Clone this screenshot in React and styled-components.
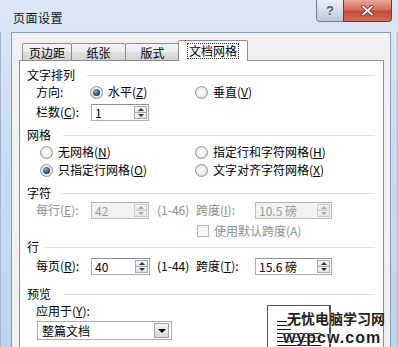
import React from 'react';
import styled, { createGlobalStyle } from 'styled-components';

const Global = createGlobalStyle`
  html, body { margin: 0; padding: 0; background: #fff; }
  body {
    font-family: "Noto Sans CJK SC", "Liberation Sans", sans-serif;
    font-size: 12px;
    color: #000;
  }
  * { box-sizing: border-box; }
`;

const Window = styled.div`
  position: relative;
  width: 398px;
  height: 347px;
  overflow: hidden;
  display: flex;
  flex-direction: column;
  background: linear-gradient(180deg, #dbe8f6 0%, #c9dcf1 45%, #bfd5ed 100%);
`;

const TitleBar = styled.div`
  height: 32px;
  flex: none;
  display: flex;
  align-items: flex-start;
  padding-left: 13px;
`;

const Title = styled.div`
  margin-top: 10px;
  line-height: 16px;
  font-size: 12px;
  letter-spacing: 0.5px;
  color: #111;
`;

const Controls = styled.div`
  margin-left: auto;
  margin-right: 6px;
  display: flex;
`;

const HelpButton = styled.div`
  width: 27px;
  height: 22px;
  border: 1px solid #6f7d93;
  border-top: none;
  border-right: none;
  border-radius: 0 0 0 4px;
  background: linear-gradient(180deg, #e9eef5 0%, #d3dce8 50%, #bfcbdb 100%);
  display: flex;
  align-items: center;
  justify-content: center;
  font-family: "Liberation Sans", sans-serif;
  font-weight: bold;
  font-size: 13px;
  color: #4b5566;
  text-shadow: 0 0 2px #fff;
`;

const CloseButton = styled.div`
  width: 49px;
  height: 22px;
  border: 1px solid #6b3a36;
  border-top: none;
  border-radius: 0 0 4px 0;
  background: linear-gradient(180deg, #e9a89b 0%, #d7705f 45%, #c44a36 55%, #d2705a 100%);
  display: flex;
  align-items: center;
  justify-content: center;
`;

const Frame = styled.div`
  flex: 1;
  display: flex;
  padding: 0 7px 0 11px;
  box-shadow: inset 8px 0 0 -7px #9fb5cf, inset -3px 0 0 -2px #9fb5cf;
`;

const ClientArea = styled.div`
  flex: 1;
  display: flex;
  flex-direction: column;
  background: #f0f0f0;
  border: 1px solid #8a9cb4;
  border-bottom: none;
  padding: 7px 6px 0 7px;
`;

const TabStrip = styled.div`
  position: relative;
  z-index: 1;
  display: flex;
  align-items: flex-end;
  height: 21px;
  padding-left: 3px;
  margin-bottom: -1px;
`;

const Tab = styled.div`
  width: ${p => p.$width}px;
  height: ${p => (p.$active ? 21 : 18)}px;
  margin-right: -1px;
  margin-left: ${p => (p.$active ? -1 : 0)}px;
  border: 1px solid #898c95;
  border-bottom: ${p => (p.$active ? 'none' : '1px solid #898c95')};
  border-radius: 2px 2px 0 0;
  background: ${p =>
    p.$active ? '#fff' : 'linear-gradient(180deg, #f4f4f4 0%, #ebebeb 50%, #dddddd 51%, #d4d4d4 100%)'};
  display: flex;
  align-items: center;
  justify-content: center;
  line-height: 14px;
  padding-top: ${p => (p.$active ? 0 : 1)}px;
  position: relative;
  z-index: ${p => (p.$active ? 2 : 1)};
`;

const FocusText = styled.span`
  outline: 1px dotted #333;
  padding: 0 1px;
`;

const Panel = styled.div`
  flex: 1;
  background: #fff;
  border: 1px solid #898c95;
  border-bottom: none;
  padding: 6px 8px 0 7px;
  display: flex;
  flex-direction: column;
`;

const Header = styled.div`
  display: flex;
  align-items: center;
  height: 16px;
  margin-top: ${p => p.$mt || 0}px;
  line-height: 16px;
`;

const HeaderLine = styled.div`
  flex: 1;
  height: 1px;
  margin-left: ${p => p.$gap || 9}px;
  background: #dcdfe4;
`;

const Row = styled.div`
  display: flex;
  align-items: center;
  height: ${p => p.$h || 18}px;
  margin-top: ${p => p.$mt || 0}px;
  padding-left: ${p => p.$indent || 0}px;
  color: ${p => (p.$disabled ? '#8d8d8d' : '#000')};
  line-height: 16px;
  white-space: nowrap;
`;

const Cell = styled.div`
  width: ${p => p.$width}px;
  margin-left: ${p => p.$ml || 0}px;
  flex: none;
`;

const Option = styled.div`
  display: flex;
  align-items: center;
  gap: 5px;
  width: ${p => (p.$width ? `${p.$width}px` : 'auto')};
  flex: none;
`;

const RadioCircle = styled.div`
  width: 13px;
  height: 13px;
  border-radius: 50%;
  border: 1px solid #8e8f8f;
  background: radial-gradient(circle at 50% 45%, #ffffff 0%, #eeeeee 45%, #d4d4d4 100%);
  display: flex;
  align-items: center;
  justify-content: center;

  &::after {
    content: '';
    display: ${p => (p.$checked ? 'block' : 'none')};
    width: 7px;
    height: 7px;
    border-radius: 50%;
    background: radial-gradient(circle at 40% 35%, #8fb4d8 0%, #2f4d70 55%, #15263b 100%);
  }
`;

const CheckBox = styled.div`
  width: 12px;
  height: 12px;
  border: 1px solid #b8b8b8;
  background: linear-gradient(180deg, #f2f2f2 0%, #fbfbfb 100%);
`;

const Acc = styled.span`
  text-decoration: underline;
  text-underline-offset: 1px;
`;

const SpinBox = styled.div`
  width: ${p => p.$width}px;
  height: 17px;
  flex: none;
  display: flex;
  border: 1px solid ${p => (p.$disabled ? '#b9bcc2' : '#abadb3')};
  border-top-color: ${p => (p.$disabled ? '#b0b3b8' : '#8e9198')};
  background: ${p => (p.$disabled ? '#f1f2f4' : '#fff')};
  padding: 1px 1px 1px 0;
`;

const SpinValue = styled.div`
  flex: 1;
  padding-left: 3px;
  line-height: 13px;
  font-size: 12px;
  color: ${p => (p.$disabled ? '#9a9a9a' : '#000')};
`;

const SpinButtons = styled.div`
  width: 13px;
  display: flex;
  flex-direction: column;
`;

const SpinBtn = styled.div`
  flex: 1;
  border: 1px solid ${p => (p.$disabled ? '#c7cbd1' : '#a3aab4')};
  margin-top: ${p => (p.$down ? -1 : 0)}px;
  background: linear-gradient(180deg, #f7f8fa 0%, #dfe4ea 100%);
  display: flex;
  align-items: center;
  justify-content: center;
`;

const Arrow = styled.div`
  width: 0;
  height: 0;
  border-left: 3px solid transparent;
  border-right: 3px solid transparent;
  ${p =>
    p.$up
      ? `border-bottom: 3px solid ${p.$disabled ? '#a8a8a8' : '#333'};`
      : `border-top: 3px solid ${p.$disabled ? '#a8a8a8' : '#333'};`}
`;

const PreviewBody = styled.div`
  display: flex;
`;

const LeftCol = styled.div`
  width: 240px;
  flex: none;
  display: flex;
  flex-direction: column;
`;

const SelectBox = styled.div`
  margin-top: 2px;
  margin-left: 10px;
  width: 135px;
  height: 19px;
  border: 1px solid #a7abb2;
  background: #fff;
  display: flex;
  align-items: stretch;
  padding: 1px;
`;

const SelectText = styled.div`
  flex: 1;
  padding-left: 3px;
  line-height: 15px;
`;

const DropButton = styled.div`
  width: 15px;
  margin-right: 1px;
  border: 1px solid #9aa0a8;
  background: linear-gradient(180deg, #f3f3f3 0%, #d9d9d9 100%);
  display: flex;
  align-items: center;
  justify-content: center;

  &::after {
    content: '';
    border-left: 4px solid transparent;
    border-right: 4px solid transparent;
    border-top: 4px solid #000;
  }
`;

const Page = styled.div`
  margin-top: 3px;
  width: 64px;
  height: 70px;
  border: 1px solid #555;
  border-right-width: 2px;
  background: #fff;
  padding: 15px 0 0 9px;
  display: flex;
  flex-direction: column;
  gap: 3px;
`;

const PageLine = styled.div`
  width: ${p => p.$width}px;
  height: 1px;
  background: #111;
`;

const Watermark = styled.div`
  position: absolute;
  left: ${p => p.$left}px;
  top: ${p => p.$top}px;
  font-weight: bold;
  color: #1e1e1e;
  text-shadow: 0 0 2px #fff, 0 0 2px #fff;
  white-space: nowrap;
`;

const WatermarkCN = styled(Watermark)`
  font-family: "Noto Sans CJK SC", sans-serif;
  font-size: 14px;
  line-height: 17px;
`;

const WatermarkEN = styled(Watermark)`
  font-family: "Liberation Sans", Arial, sans-serif;
  font-size: 16px;
  letter-spacing: 1px;
  line-height: 18px;
`;

const Radio = ({ checked, width, children }) => (
  <Option $width={width}>
    <RadioCircle $checked={checked} />
    <span>{children}</span>
  </Option>
);

const Spin = ({ value, width, disabled }) => (
  <SpinBox $width={width} $disabled={disabled}>
    <SpinValue $disabled={disabled}>{value}</SpinValue>
    <SpinButtons>
      <SpinBtn $disabled={disabled}>
        <Arrow $up $disabled={disabled} />
      </SpinBtn>
      <SpinBtn $down $disabled={disabled}>
        <Arrow $disabled={disabled} />
      </SpinBtn>
    </SpinButtons>
  </SpinBox>
);

export default function App() {
  return (
    <>
      <Global />
      <Window>
        <TitleBar>
          <Title>页面设置</Title>
          <Controls>
            <HelpButton>?</HelpButton>
            <CloseButton>
              <svg width="13" height="11" viewBox="0 0 13 11">
                <path d="M2 1.5 L11 9.5 M11 1.5 L2 9.5" stroke="#5a1e16" strokeWidth="3.4" strokeLinecap="round" />
                <path d="M2 1.5 L11 9.5 M11 1.5 L2 9.5" stroke="#fff" strokeWidth="2" strokeLinecap="round" />
              </svg>
            </CloseButton>
          </Controls>
        </TitleBar>
        <Frame>
          <ClientArea>
            <TabStrip>
              <Tab $width={50}>页边距</Tab>
              <Tab $width={55}>纸张</Tab>
              <Tab $width={55}>版式</Tab>
              <Tab $width={70} $active>
                <FocusText>文档网格</FocusText>
              </Tab>
            </TabStrip>
            <Panel>
              <Header>
                <span>文字排列</span>
                <HeaderLine $gap={12} />
              </Header>
              <Row $indent={9}>
                <Cell $width={54}>方向:</Cell>
                <Radio checked width={105}>
                  水平(<Acc>Z</Acc>)
                </Radio>
                <Radio>
                  垂直(<Acc>V</Acc>)
                </Radio>
              </Row>
              <Row $indent={9} $mt={2}>
                <Cell $width={55}>
                  栏数(<Acc>C</Acc>):
                </Cell>
                <Spin value="1" width={58} />
              </Row>
              <Header $mt={6}>
                <span>网格</span>
                <HeaderLine $gap={12} />
              </Header>
              <Row $indent={13}>
                <Radio width={155}>
                  无网格(<Acc>N</Acc>)
                </Radio>
                <Radio>
                  指定行和字符网格(<Acc>H</Acc>)
                </Radio>
              </Row>
              <Row $indent={13}>
                <Radio checked width={155}>
                  只指定行网格(<Acc>O</Acc>)
                </Radio>
                <Radio>
                  文字对齐字符网格(<Acc>X</Acc>)
                </Radio>
              </Row>
              <Header $mt={6}>
                <span>字符</span>
                <HeaderLine $gap={10} />
              </Header>
              <Row $indent={9} $disabled>
                <Cell $width={55}>
                  每行(<Acc>E</Acc>):
                </Cell>
                <Spin value="42" width={58} disabled />
                <Cell $width={39} $ml={8}>
                  (1-46)
                </Cell>
                <Cell $width={59}>
                  跨度(<Acc>I</Acc>):
                </Cell>
                <Spin value="10.5 磅" width={77} disabled />
              </Row>
              <Row $indent={170} $h={16} $mt={4} $disabled>
                <Option>
                  <CheckBox />
                  <span>使用默认跨度(A)</span>
                </Option>
              </Row>
              <Header>
                <span>行</span>
                <HeaderLine $gap={6} />
              </Header>
              <Row $indent={9} $mt={2}>
                <Cell $width={55}>
                  每页(<Acc>R</Acc>):
                </Cell>
                <Spin value="40" width={59} />
                <Cell $width={39} $ml={7}>
                  (1-44)
                </Cell>
                <Cell $width={59}>
                  跨度(<Acc>T</Acc>):
                </Cell>
                <Spin value="15.6 磅" width={77} />
              </Row>
              <Header $mt={11}>
                <span>预览</span>
                <HeaderLine $gap={12} />
              </Header>
              <PreviewBody>
                <LeftCol>
                  <Row $indent={9} $h={16} $mt={1}>
                    应用于(<Acc>Y</Acc>):
                  </Row>
                  <SelectBox>
                    <SelectText>整篇文档</SelectText>
                    <DropButton />
                  </SelectBox>
                </LeftCol>
                <Page>
                  <PageLine $width={10} />
                  <PageLine $width={14} />
                  <PageLine $width={14} />
                  <PageLine $width={44} />
                  <PageLine $width={44} />
                  <PageLine $width={44} />
                  <PageLine $width={44} />
                </Page>
              </PreviewBody>
            </Panel>
          </ClientArea>
        </Frame>
        <WatermarkCN $left={287} $top={310}>
          无忧电脑学习网
        </WatermarkCN>
        <WatermarkEN $left={283} $top={329}>
          wypcw.com
        </WatermarkEN>
      </Window>
    </>
  );
}
